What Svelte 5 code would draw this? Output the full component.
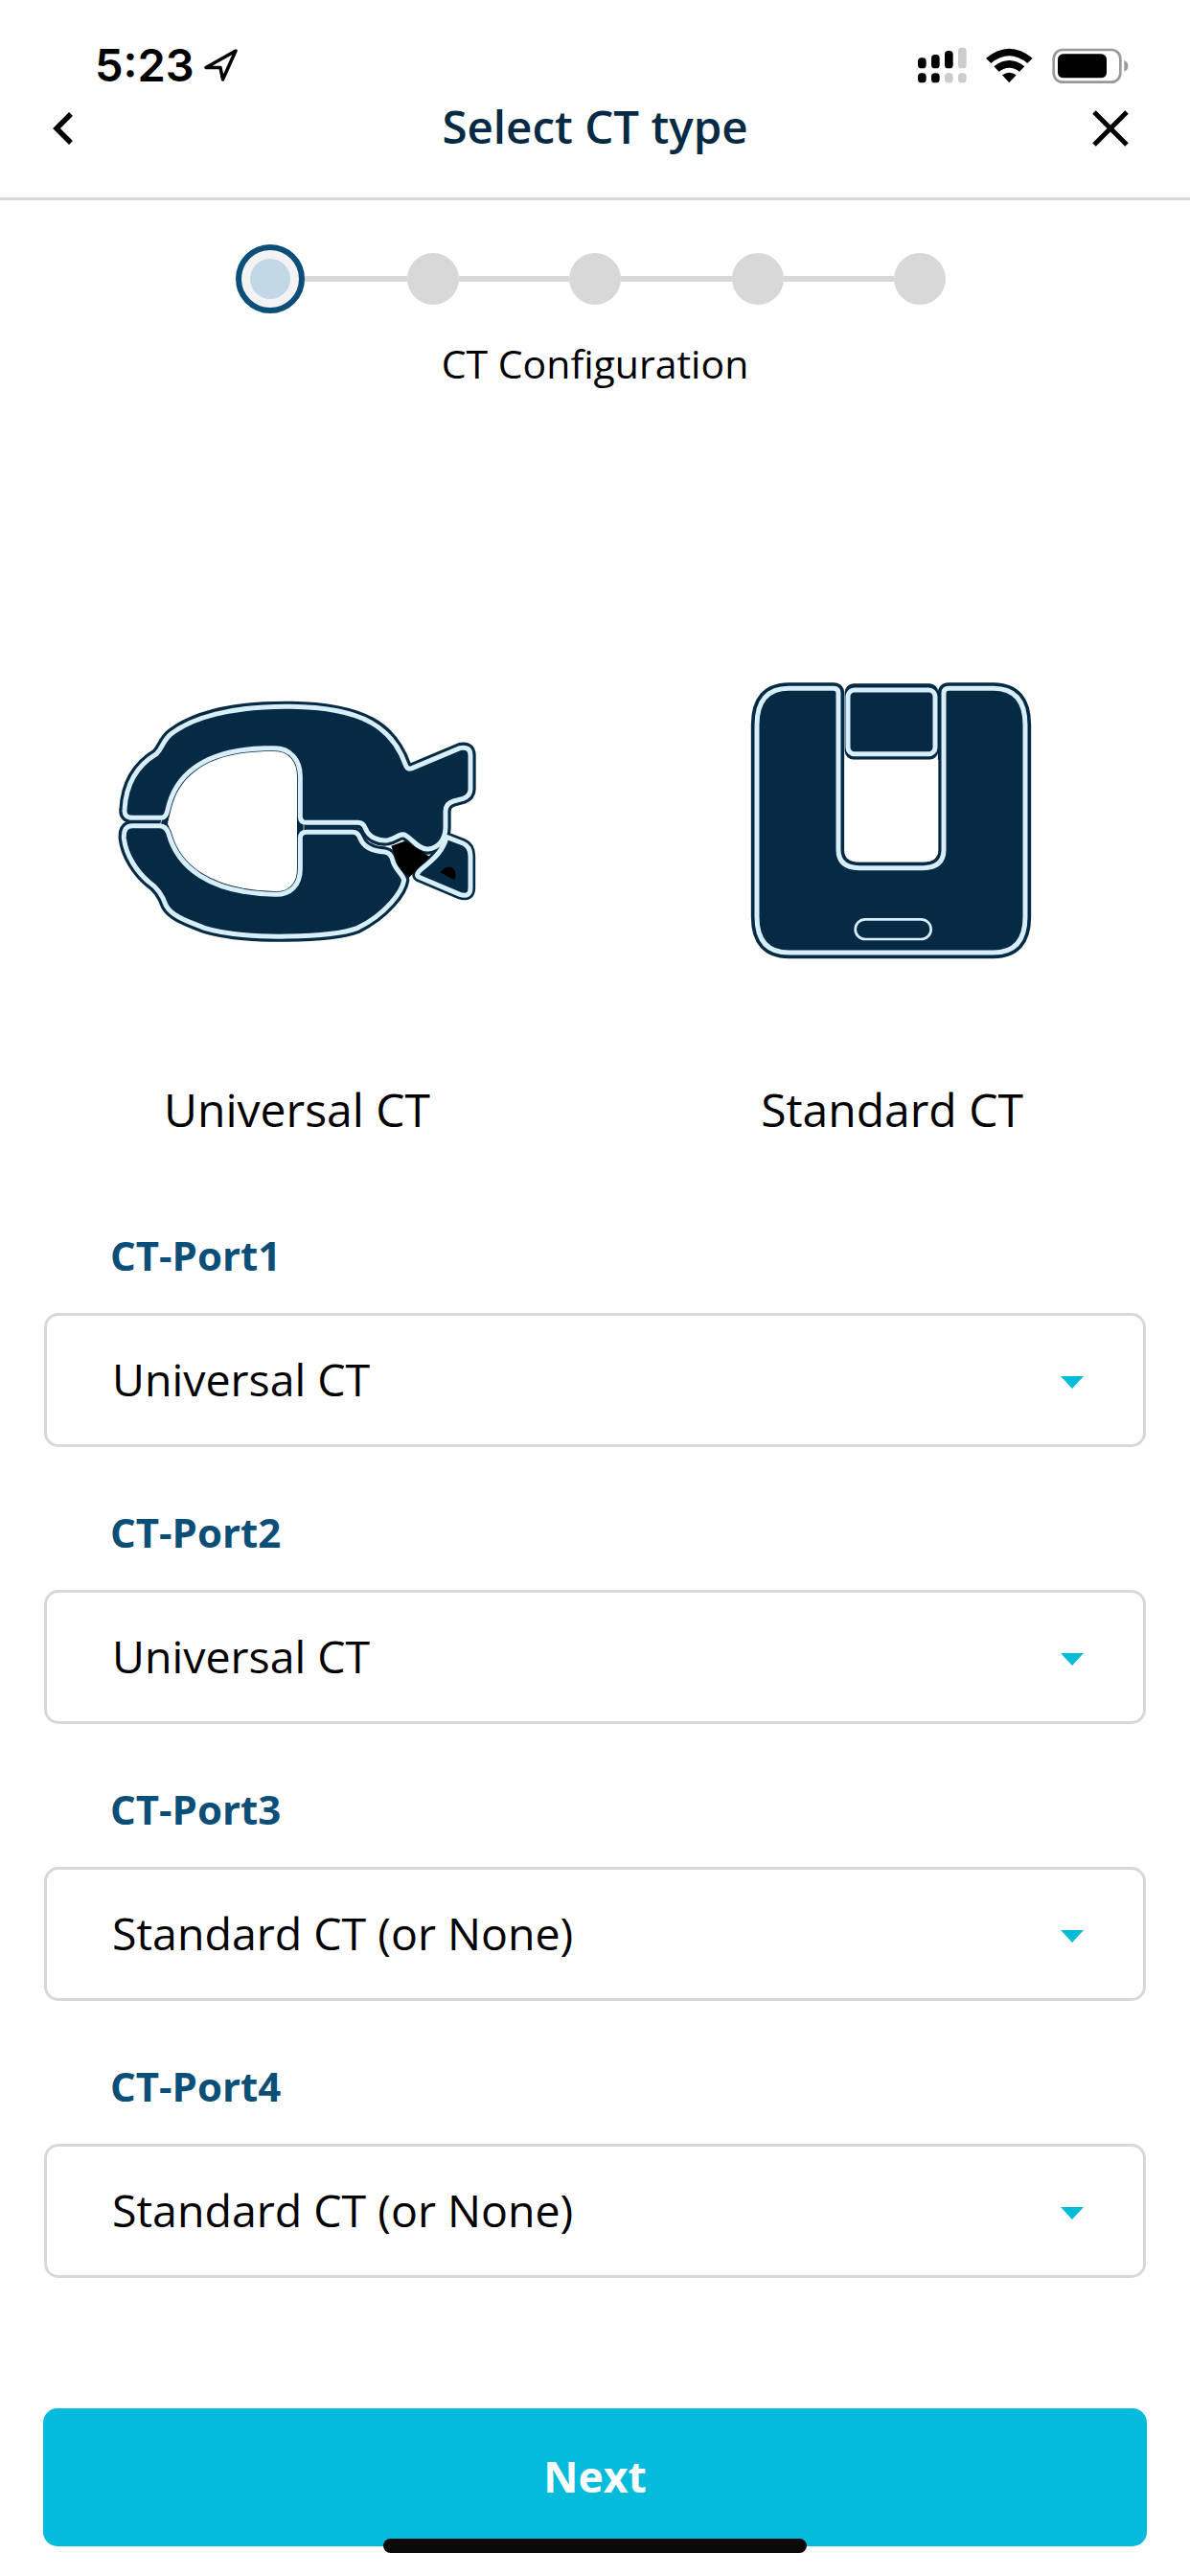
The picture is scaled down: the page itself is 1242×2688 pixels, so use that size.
<script>
  const ports = [
    { name: 'CT-Port1', value: 'Universal CT' },
    { name: 'CT-Port2', value: 'Universal CT' },
    { name: 'CT-Port3', value: 'Standard CT (or None)' },
    { name: 'CT-Port4', value: 'Standard CT (or None)' }
  ];
  const upper = 'M145 490L235 490Q250 490 255 465C275 370 350 278 560 272L590 272C640 272 670 310 670 360L670 485Q670 505 690 505L850 505Q868 505 875 525C885 550 915 565 945 560C970 555 985 535 1000 545C1020 555 1040 590 1070 588C1100 585 1125 560 1125 520L1125 470Q1125 445 1150 438L1180 430Q1203 422 1203 400L1203 295Q1203 265 1170 272L1020 335Q1005 340 1000 325C960 210 870 145 640 142C450 140 330 178 265 228C240 248 240 270 220 290C170 320 125 370 120 465Q118 490 145 490Z';
  const lower = 'M145 515L230 515Q250 515 258 540C285 640 380 725 590 730C640 732 670 700 670 650L670 555Q670 535 690 535L835 535Q850 535 858 555C870 585 900 595 935 597Q955 600 960 625C965 650 990 665 995 685C990 720 940 790 850 835C770 865 500 875 370 835C320 815 270 800 250 765C240 735 225 710 195 690C160 660 125 610 118 555Q115 515 145 515Z';
  const tail = 'M1128 550L1180 570Q1203 580 1203 610L1203 710Q1203 740 1170 730L1040 675Q1030 668 1050 650C1090 620 1120 590 1128 550Z';
  const hole = 'M255 465C275 370 350 278 560 272L590 272C640 272 670 310 670 360L670 650C670 700 640 732 590 730C380 725 285 640 258 540L244 510Z';
  const frame = 'M220 85L360 85Q375 85 375 100L375 590Q375 645 440 647L640 647Q705 645 705 590L705 100Q705 85 720 85L860 85Q960 85 960 200L960 800Q960 912 860 912L220 912Q120 912 120 800L120 200Q120 85 220 85Z';
</script>

<div class="page">
  <div class="status">
    <div class="clock">
      <span>5:23</span>
      <svg width="36" height="34" viewBox="0 0 36 34">
        <path d="M33 2L2 19.500L17 19.500L19.500 32Z" fill="none" stroke="#000" stroke-width="3.500" stroke-linejoin="round" />
      </svg>
    </div>
    <svg class="indicators" width="224" height="40" viewBox="78 50 672 120">
      <rect x="84" y="87" width="26" height="33" rx="11" />
      <rect x="126" y="77" width="26" height="43" rx="11" />
      <rect x="168" y="65" width="26" height="55" rx="11" />
      <rect x="210" y="55" width="26" height="65" rx="11" fill="#ccc" />
      <rect x="84" y="135" width="26" height="30" rx="11" />
      <rect x="126" y="135" width="26" height="30" rx="11" />
      <rect x="168" y="135" width="26" height="30" rx="11" fill="#ccc" />
      <rect x="210" y="135" width="26" height="30" rx="11" fill="#ccc" />
      <path d="M297 88Q370 28 443 88L427 104Q370 58 313 104Z" />
      <path d="M322 114Q370 76 418 114L402 130Q370 106 338 130Z" />
      <path d="M348 141Q370 126 392 141L370 165Z" />
      <rect x="509" y="62" width="209" height="101" rx="28" fill="none" stroke="#999" stroke-width="8" />
      <rect x="522" y="75" width="153" height="75" rx="17" />
      <path d="M730 95Q742 100 742 112Q742 125 730 130Z" fill="#999" />
    </svg>
  </div>

  <header class="nav">
    <svg width="28" height="38" viewBox="0 0 28 38">
      <path d="M22 4L7 19L22 34" fill="none" stroke="#000" stroke-width="5.500" />
    </svg>
    <h1>Select CT type</h1>
    <svg class="close" width="38" height="38" viewBox="0 0 38 38">
      <path d="M2 2L36 36M36 2L2 36" fill="none" stroke="#000" stroke-width="5" />
    </svg>
  </header>

  <section class="stepper">
    <div class="steps">
      <span class="dot active"></span>
      <span class="line"></span>
      <span class="dot"></span>
      <span class="line"></span>
      <span class="dot"></span>
      <span class="line"></span>
      <span class="dot"></span>
      <span class="line"></span>
      <span class="dot"></span>
    </div>
    <p>CT Configuration</p>
  </section>

  <section class="types">
    <div class="type">
      <svg width="460" height="320" viewBox="-30 0 1380 960">
        <g stroke-linejoin="round">
          <path d={upper} fill="#062a43" stroke="#062a43" stroke-width="34" />
          <path d={lower} fill="#062a43" stroke="#062a43" stroke-width="34" />
          <path d={tail} fill="#062a43" stroke="#062a43" stroke-width="31" />
          <path d="M955 578L1000 562L1075 612L1010 678L980 650Z" fill="#000" />
          <path d={hole} fill="#fff" stroke="#fff" stroke-width="24" />
          <path d={hole} fill="#fff" stroke="#062a43" stroke-width="20" />
          <path d={tail} fill="#062a43" stroke="#d8eefb" stroke-width="15" />
          <path d={upper} fill="#062a43" stroke="#d8eefb" stroke-width="15" />
          <path d={lower} fill="#062a43" stroke="#d8eefb" stroke-width="15" />
          <path d="M1108 660Q1125 640 1145 645Q1165 660 1152 685Z" fill="#000" />
        </g>
      </svg>
      <span>Universal CT</span>
    </div>
    <div class="type">
      <svg width="340" height="320" viewBox="33 0 1020 960">
        <path d={frame} fill="#062a43" stroke="#062a43" stroke-width="37" stroke-linejoin="round" />
        <rect x="395" y="70" width="293" height="238" rx="28" fill="#062a43" />
        <path d={frame} fill="none" stroke="#d8eefb" stroke-width="15" stroke-linejoin="round" />
        <rect x="405" y="90" width="273" height="200" rx="20" fill="#062a43" stroke="#d8eefb" stroke-width="15" />
        <path d="M395 308L688 308L688 590Q688 628 640 628L440 628Q395 628 395 590Z" fill="#fff" />
        <rect x="428" y="808" width="237" height="62" rx="31" fill="none" stroke="#d8eefb" stroke-width="8" />
      </svg>
      <span>Standard CT</span>
    </div>
  </section>

  <section class="fields">
    {#each ports as port}
      <div class="field">
        <label for={port.name}>{port.name}</label>
        <div class="select" id={port.name}>
          <span>{port.value}</span>
          <i class="caret"></i>
        </div>
      </div>
    {/each}
  </section>

  <button class="next"><span>Next</span></button>
  <div class="home"></div>
</div>

<style>
  :global(body) {
    margin: 0;
    background: #fff;
  }

  .page {
    position: relative;
    width: 1242px;
    height: 2688px;
    overflow: hidden;
    display: flex;
    flex-direction: column;
    background: #fff;
    color: #000;
    font-family: "Open Sans", sans-serif;
  }

  .status {
    height: 64px;
    padding: 36px 62px 0 99px;
    display: flex;
    justify-content: space-between;
    align-items: center;
  }

  .clock {
    display: flex;
    align-items: center;
    gap: 10px;
    font-family: Inter, sans-serif;
    font-size: 47px;
    font-weight: 600;
    line-height: 64px;
  }

  .nav {
    height: 68px;
    padding: 0 58px 38px;
    display: grid;
    grid-template-columns: 1fr auto 1fr;
    align-items: center;
    border-bottom: 3px solid #d8d8d8;
  }

  .nav svg {
    margin-left: -6px;
  }

  .nav h1 {
    margin: 0 0 4px;
    color: #062a43;
    font-size: 47.500px;
    font-weight: 600;
    line-height: 64px;
  }

  .nav .close {
    justify-self: end;
    margin: 0 6px 0 0;
  }

  .stepper {
    padding-top: 55px;
    display: flex;
    flex-direction: column;
    align-items: center;
  }

  .steps {
    width: 732px;
    height: 54px;
    display: flex;
    align-items: center;
  }

  .dot {
    flex: none;
    width: 54px;
    height: 54px;
    border-radius: 50%;
    background: #d8d8d8;
  }

  .dot.active {
    position: relative;
    z-index: 1;
    box-sizing: border-box;
    width: 72px;
    height: 72px;
    margin: 0 -9px;
    border: 6px solid #0b4f78;
    background: #c2d8e6;
    box-shadow: inset 0 0 0 9px #f3f3f3;
  }

  .line {
    flex: 1;
    height: 6px;
    background: #d8d8d8;
  }

  .stepper p {
    margin: 33px 0 0;
    font-size: 41px;
    line-height: 56px;
  }

  .types {
    margin-top: 283px;
    display: grid;
    grid-template-columns: 620px 622px;
  }

  .type {
    display: flex;
    flex-direction: column;
    align-items: center;
    font-size: 48px;
    font-weight: 500;
    line-height: 64px;
  }

  .type span {
    margin-top: 116px;
  }

  .fields {
    margin-top: 95px;
    padding: 0 46px;
    display: flex;
    flex-direction: column;
    gap: 64px;
  }

  .field label {
    display: block;
    margin: 0 0 35px 69px;
    color: #0b4f78;
    font-size: 42px;
    font-weight: 700;
    line-height: 50px;
  }

  .select {
    box-sizing: border-box;
    height: 140px;
    padding: 0 62px 0 68px;
    display: flex;
    justify-content: space-between;
    align-items: center;
    border: 3px solid #d8d8d8;
    border-radius: 15px;
    font-size: 46.500px;
  }

  .select span {
    margin-top: -3px;
  }

  .caret {
    width: 0;
    height: 0;
    margin-top: 4px;
    border-left: 12.500px solid transparent;
    border-right: 12.500px solid transparent;
    border-top: 13px solid #00bcd9;
  }

  .next {
    flex: none;
    width: 1152px;
    height: 144px;
    margin: 136px 0 0 45px;
    border: 0;
    border-radius: 15px;
    background: #04bbdc;
    color: #fff;
    font-family: inherit;
    font-size: 44.500px;
    font-weight: 700;
  }

  .next span {
    position: relative;
    top: -2px;
  }

  .home {
    position: absolute;
    left: 400px;
    top: 2649px;
    width: 442px;
    height: 15px;
    border-radius: 8px;
    background: #0a0a0a;
  }
</style>
